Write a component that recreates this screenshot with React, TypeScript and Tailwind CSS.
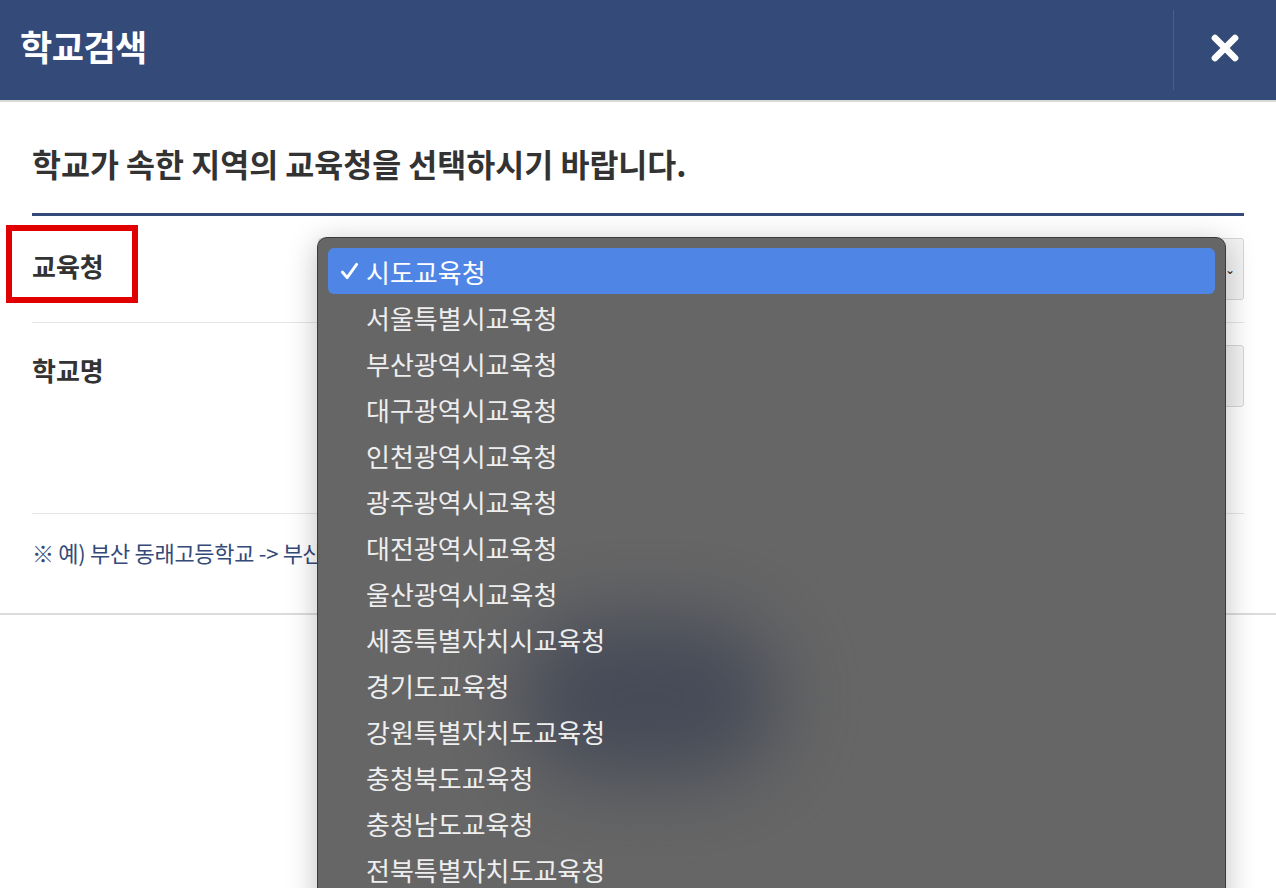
import { X } from "lucide-react";

const offices = [
  "시도교육청",
  "서울특별시교육청",
  "부산광역시교육청",
  "대구광역시교육청",
  "인천광역시교육청",
  "광주광역시교육청",
  "대전광역시교육청",
  "울산광역시교육청",
  "세종특별자치시교육청",
  "경기도교육청",
  "강원특별자치도교육청",
  "충청북도교육청",
  "충청남도교육청",
  "전북특별자치도교육청",
  "전라남도교육청",
];

const font = "font-['Noto_Sans_CJK_KR','Noto_Sans',sans-serif]";

export default function App() {
  return (
    <div className={`relative h-[888px] w-[1276px] overflow-hidden bg-white ${font}`}>
      {/* 헤더 */}
      <header className="flex h-[102px] items-stretch border-b-2 border-[#d9d9d9] bg-[#344a79]">
        <h1 className="flex flex-1 items-center pl-5 pb-2 text-[35px] font-bold tracking-[-0.5px] text-white">
          학교검색
        </h1>
        <div className="my-[10px] w-px bg-[#4b5f8a]" />
        <button type="button" className="flex w-[102px] items-center justify-center pb-1 text-white">
          <X className="h-10 w-10" strokeWidth={4} />
        </button>
      </header>

      {/* 본문 */}
      <section className="border-b-2 border-[#dcdcdc] px-8">
        <p className="pt-[38px] pb-[26px] text-[31.5px] font-bold text-[#333]">
          학교가 속한 지역의 교육청을 선택하시기 바랍니다.
        </p>
        <div className="h-[3px] bg-[#344a79]" />

        <div className="flex items-center border-b border-[#e6e6e6] py-[22px]">
          <div className="w-[286px] pb-[8px] text-[26px] font-bold text-[#333]">교육청</div>
          <div className="flex h-[62px] flex-1 items-center justify-end rounded-[3px] border border-[#d6d6d6] bg-[#f3f3f3] pr-2">
            <span className="text-[12px] text-[#222]">⌄</span>
          </div>
        </div>

        <div className="flex items-start border-b border-[#e6e6e6] pt-[22px] pb-[106px]">
          <div className="w-[286px] pt-[5px] text-[26px] font-bold text-[#333]">학교명</div>
          <div className="h-[62px] flex-1 rounded-[3px] border border-[#d6d6d6] bg-[#f3f3f3]" />
        </div>

        <p className="pt-[22px] pb-[44px] text-[22px] tracking-[-0.3px] text-[#344a79]">
          ※ 예) 부산 동래고등학교 -&gt; 부산 동래고등학교 검색
        </p>
      </section>

      {/* 빨간 강조 박스 */}
      <div className="absolute left-[6px] top-[225px] h-[78px] w-[132px] border-[6px] border-[#e00000]" />

      {/* 선택 목록 */}
      <div className="absolute left-[317px] top-[237px] h-[700px] w-[909px] overflow-hidden rounded-[10px] border border-[#3a3a3a] bg-[#666666] p-[10px] shadow-[0_6px_30px_rgba(0,0,0,0.25)]">
        <div className="absolute left-[200px] top-[380px] h-[160px] w-[260px] rounded-full bg-[#3e4454] opacity-80 blur-[40px]" />
        <ul className="relative">
          {offices.map((name, i) => (
            <li
              key={name}
              className={
                i === 0
                  ? "flex h-[46px] items-center rounded-[6px] bg-[#4f86e6] pl-[12px] text-[26px] text-white"
                  : "flex h-[46px] items-center pl-[38px] text-[26px] text-[#eeeeee]"
              }
            >
              {i === 0 && (
                <svg viewBox="0 0 20 20" className="mr-[7px] h-[19px] w-[19px]" fill="none" stroke="currentColor" strokeWidth={3} strokeLinecap="round" strokeLinejoin="round">
                  <path d="M2.5 10.5 L7.5 16.5 L17.5 2.5" />
                </svg>
              )}
              {name}
            </li>
          ))}
        </ul>
      </div>
    </div>
  );
}
